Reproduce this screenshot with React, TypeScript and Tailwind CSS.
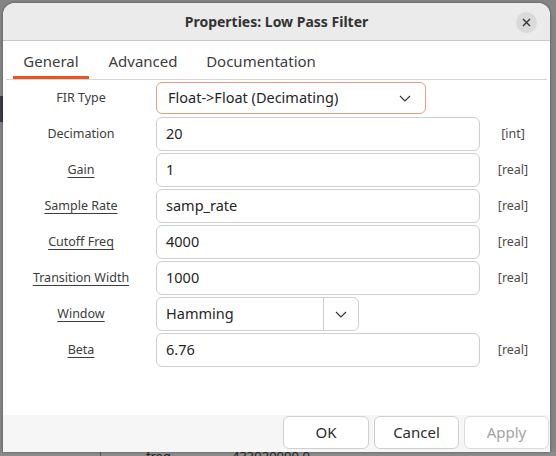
import React from "react";

type Row = {
  label: string;
  value: string;
  unit?: string;
  underline?: boolean;
  kind?: "entry" | "combo" | "enum";
};

const rows: Row[] = [
  { label: "FIR Type", value: "Float->Float (Decimating)", kind: "combo" },
  { label: "Decimation", value: "20", unit: "[int]" },
  { label: "Gain", value: "1", unit: "[real]", underline: true },
  { label: "Sample Rate", value: "samp_rate", unit: "[real]", underline: true },
  { label: "Cutoff Freq", value: "4000", unit: "[real]", underline: true },
  { label: "Transition Width", value: "1000", unit: "[real]", underline: true },
  { label: "Window", value: "Hamming", underline: true, kind: "enum" },
  { label: "Beta", value: "6.76", unit: "[real]", underline: true },
];

const Chevron = () => (
  <svg width="12" height="7" viewBox="0 0 12 7" fill="none">
    <path d="M1 1l5 5 5-5" stroke="#3a3a3a" strokeWidth="1.2" />
  </svg>
);

const Field: React.FC<{ row: Row }> = ({ row }) => {
  if (row.kind === "combo") {
    return (
      <div className="w-[270px] h-[32px] rounded-[6px] border-[1.5px] border-[#ea9d82] flex items-center justify-between pl-[11px] pr-[14px] text-[14.5px] text-[#262626]">
        <span>{row.value}</span>
        <Chevron />
      </div>
    );
  }
  if (row.kind === "enum") {
    return (
      <div className="w-[203px] h-[34px] rounded-[6px] border border-[#cfcfcf] flex items-center text-[14.5px] text-[#262626]">
        <span className="flex-1 pl-[9px]">{row.value}</span>
        <div className="w-[35px] h-full border-l border-[#cfcfcf] flex items-center justify-center">
          <Chevron />
        </div>
      </div>
    );
  }
  return (
    <div className="w-[324px] h-[34px] rounded-[6px] border border-[#cfcfcf] flex items-center pl-[9px] text-[14.5px] text-[#262626]">
      {row.value}
    </div>
  );
};

const App: React.FC = () => {
  return (
    <div
      className="w-[556px] h-[456px] bg-[#858585] relative overflow-hidden"
      style={{ fontFamily: '"Noto Sans", "Open Sans", sans-serif' }}
    >
      {/* window behind the dialog */}
      <div className="absolute left-0 top-[96px] w-[3px] h-[26px] bg-[#3b3b4a]" />
      <div className="absolute left-0 top-[452px] w-[556px] h-[4px] bg-[#8c8c8c]">
        <div className="absolute left-[100px] top-0 w-[1px] h-full bg-[#555]" />
        <span className="absolute left-[146px] top-[-2px] text-[13px] leading-none text-[#222]">freq</span>
        <span className="absolute left-[232px] top-[-2px] text-[13px] leading-none text-[#222]">433920000.0</span>
      </div>

      {/* dialog */}
      <div className="absolute left-[3px] top-[3px] w-[547px] h-[449px] bg-white rounded-t-[12px] overflow-hidden flex flex-col shadow-[0_0_3px_rgba(0,0,0,0.4)]">
        <div className="relative h-[38px] bg-[#ebebeb] border-b border-[#c8c8c8] flex items-center justify-center shrink-0">
          <span className="text-[14px] font-bold text-[#333]">Properties: Low Pass Filter</span>
          <div className="absolute right-[13px] top-[9px] w-[21px] h-[21px] rounded-full bg-[#dadada] flex items-center justify-center">
            <svg width="9" height="9" viewBox="0 0 9 9">
              <path d="M1 1l7 7M8 1l-7 7" stroke="#333" strokeWidth="1.4" />
            </svg>
          </div>
        </div>

        <div className="h-[39px] mx-[3px] border-b border-[#d6d6d6] flex shrink-0 pl-[7px] gap-[9px] text-[15px] text-[#3d3d3d]">
          <div className="w-[76px] flex items-center justify-center border-b-[3px] border-[#e95420] pt-[5px]">General</div>
          <div className="w-[90px] flex items-center justify-center pt-[3px] pb-[1px]">Advanced</div>
          <div className="w-[128px] flex items-center justify-center pt-[3px] pb-[1px]">Documentation</div>
        </div>

        <div className="flex-1 flex flex-col gap-[2px] pt-[1px]">
          {rows.map((row) => (
            <div key={row.label} className="flex items-center h-[34px]">
              <div className="w-[146px] ml-[5px] mr-[2px] text-center text-[12.5px] text-[#3d3d3d]">
                <span className={row.underline ? "underline underline-offset-[3px]" : ""}>{row.label}</span>
              </div>
              <div className="w-[324px]">
                <Field row={row} />
              </div>
              <div className="w-[66px] text-center text-[12.5px] text-[#4a4a4a]">{row.unit}</div>
            </div>
          ))}
        </div>

        <div className="h-[37px] bg-[#f6f6f6] shrink-0 flex justify-end items-start pt-[1px] pr-[1px] gap-[5px] text-[15px]">
          <button className="w-[86px] h-[33px] rounded-[6px] border border-[#cfcfcf] bg-white text-[#2d2d2d]">OK</button>
          <button className="w-[85px] h-[33px] rounded-[6px] border border-[#cfcfcf] bg-white text-[#2d2d2d]">Cancel</button>
          <button className="w-[85px] h-[33px] rounded-[6px] border border-[#dcdcdc] bg-white text-[#a3a3a3]">Apply</button>
        </div>
      </div>
    </div>
  );
};

export default App;
